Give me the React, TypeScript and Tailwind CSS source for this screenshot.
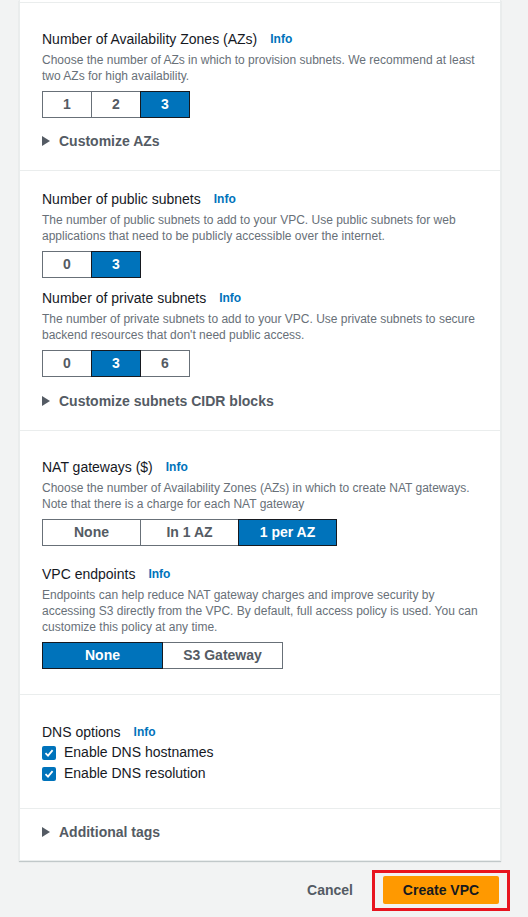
import { useState } from "react";

const font = { fontFamily: '"Liberation Sans", Arial, sans-serif' };

function Info() {
  return <span className="ml-[13px] text-[12px] font-bold text-[#0073bb]">Info</span>;
}

function Title({ children }: { children: React.ReactNode }) {
  return (
    <div className="flex items-center h-[20px] text-[14px] text-[#16191f]">
      <span>{children}</span>
      <Info />
    </div>
  );
}

function Desc({ children }: { children: React.ReactNode }) {
  return <p className="mt-[3px] text-[12px] leading-[16px] text-[#687078]">{children}</p>;
}

function Segmented({
  options,
  value,
  width,
  onChange,
}: {
  options: string[];
  value: string;
  width: string;
  onChange: (v: string) => void;
}) {
  return (
    <div className="flex mt-[7px]">
      {options.map((o, i) => {
        const on = o === value;
        return (
          <button
            key={o}
            onClick={() => onChange(o)}
            className={`${width} h-[27px] text-[14px] font-bold border ${i > 0 ? "-ml-px" : ""} ${
              on
                ? "bg-[#0073bb] text-white border-[#16191f] z-10"
                : "bg-white text-[#545b64] border-[#687078]"
            }`}>
            {o}
          </button>
        );
      })}
    </div>
  );
}

function Expander({ label, className = "" }: { label: string; className?: string }) {
  return (
    <div className={`flex items-center h-[20px] text-[14px] font-bold text-[#545b64] ${className}`}>
      <svg width="8" height="10" viewBox="0 0 8 10" className="mr-[9px]">
        <path d="M0 0 L8 5 L0 10 Z" fill="#545b64" />
      </svg>
      {label}
    </div>
  );
}

function Check({ label }: { label: string }) {
  const [on, setOn] = useState(true);
  return (
    <label className="flex items-center h-[21px] cursor-pointer" onClick={() => setOn(!on)}>
      <span
        className={`w-[14px] h-[14px] rounded-[2px] flex items-center justify-center ${
          on ? "bg-[#0073bb]" : "border border-[#687078] bg-white"
        }`}>
        {on && (
          <svg width="10" height="10" viewBox="0 0 10 10">
            <path d="M1.5 5.2 L4 7.6 L8.6 2.2" stroke="white" strokeWidth="1.8" fill="none" />
          </svg>
        )}
      </span>
      <span className="ml-[8px] text-[14px] text-[#16191f]">{label}</span>
    </label>
  );
}

export default function App() {
  const [azs, setAzs] = useState("3");
  const [pub, setPub] = useState("3");
  const [priv, setPriv] = useState("3");
  const [nat, setNat] = useState("1 per AZ");
  const [ep, setEp] = useState("None");

  return (
    <div className="min-h-screen bg-[#f2f3f3]" style={font}>
      <div className="ml-[19px] w-[482px] bg-white border-x border-b border-[#eaeded] shadow-[0_1px_1px_rgba(0,28,36,0.2)]">
        <div className="h-[3px] border-b border-[#eaeded]" />

        <section className="pl-[22px] pr-[20px] pt-[26px] pb-[19px] border-b border-[#eaeded]">
          <Title>Number of Availability Zones (AZs)</Title>
          <Desc>
            Choose the number of AZs in which to provision subnets. We recommend at least two AZs for high
            availability.
          </Desc>
          <Segmented options={["1", "2", "3"]} value={azs} width="w-[50px]" onChange={setAzs} />
          <Expander label="Customize AZs" className="mt-[13px]" />
        </section>

        <section className="pl-[22px] pr-[20px] pt-[18px] pb-[19px] border-b border-[#eaeded]">
          <Title>Number of public subnets</Title>
          <Desc>
            The number of public subnets to add to your VPC. Use public subnets for web applications that need to
            be publicly accessible over the internet.
          </Desc>
          <Segmented options={["0", "3"]} value={pub} width="w-[50px]" onChange={setPub} />
          <div className="mt-[10px]">
            <Title>Number of private subnets</Title>
          </div>
          <Desc>
            The number of private subnets to add to your VPC. Use private subnets to secure backend resources that
            don't need public access.
          </Desc>
          <Segmented options={["0", "3", "6"]} value={priv} width="w-[50px]" onChange={setPriv} />
          <Expander label="Customize subnets CIDR blocks" className="mt-[14px]" />
        </section>

        <section className="pl-[22px] pr-[20px] pt-[26px] pb-[25px] border-b border-[#eaeded]">
          <Title>NAT gateways ($)</Title>
          <Desc>
            Choose the number of Availability Zones (AZs) in which to create NAT gateways. Note that there is a
            charge for each NAT gateway
          </Desc>
          <Segmented options={["None", "In 1 AZ", "1 per AZ"]} value={nat} width="w-[99px]" onChange={setNat} />
          <div className="mt-[18px]">
            <Title>VPC endpoints</Title>
          </div>
          <Desc>
            Endpoints can help reduce NAT gateway charges and improve security by accessing S3 directly from the
            VPC. By default, full access policy is used. You can customize this policy at any time.
          </Desc>
          <Segmented options={["None", "S3 Gateway"]} value={ep} width="w-[121px]" onChange={setEp} />
        </section>

        <section className="pl-[22px] pr-[20px] pt-[27px] pb-[24px] border-b border-[#eaeded]">
          <Title>DNS options</Title>
          <div>
            <Check label="Enable DNS hostnames" />
            <Check label="Enable DNS resolution" />
          </div>
        </section>

        <section className="pl-[22px] pr-[20px] pt-[13px] pb-[18px]">
          <Expander label="Additional tags" />
        </section>
      </div>

      <div className="flex items-center justify-end pr-[18px] pt-[9px] pb-[6px]">
        <button className="text-[14px] font-bold text-[#545b64] mr-[19px]">Cancel</button>
        <div className="border-[3px] border-[#e8141f] px-[8px] pt-[3px] pb-[4px]">
          <button className="w-[116px] h-[28px] rounded-[2px] bg-[#ff9900] text-[14px] font-bold text-[#16191f]">
            Create VPC
          </button>
        </div>
      </div>
    </div>
  );
}
